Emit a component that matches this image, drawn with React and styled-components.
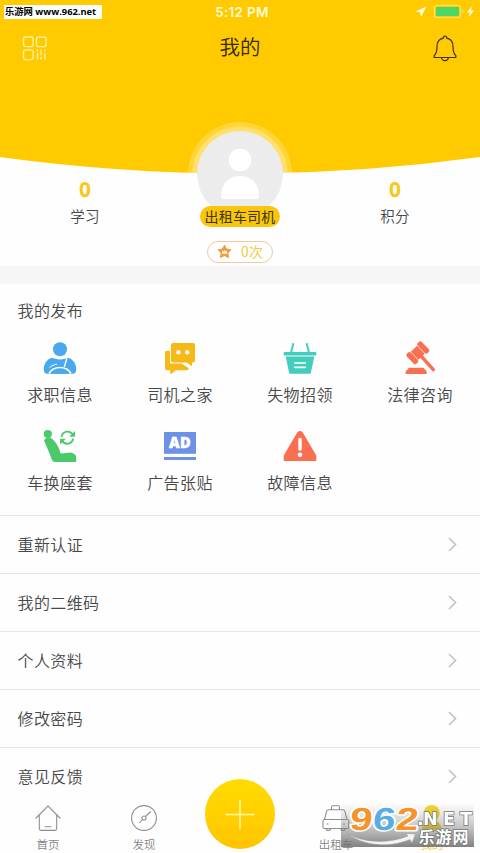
import React, { Component } from 'react'
import styled, { createGlobalStyle } from 'styled-components'

const GlobalStyle = createGlobalStyle`
    * {
        box-sizing: border-box;
    }

    body {
        margin: 0;
        background: #fff;
        font-family: 'Noto Sans CJK SC', sans-serif;
        font-weight: 350;
        color: #484848;
        overflow: hidden;
    }
`

const Page = styled.div`
    width: 480px;
    height: 853px;
    display: flex;
    flex-direction: column;
    overflow: hidden;
    background: #fefefe;
`

const Header = styled.header`
    position: relative;
    flex: none;
    height: 266px;
`

const Curve = styled.svg`
    position: absolute;
    top: 0;
    left: 0;
    z-index: 0;
`

const StatusBar = styled.div`
    position: relative;
    height: 24px;
    display: grid;
    grid-template-columns: 1fr auto 1fr;
    align-items: center;
`

const SiteTag = styled.span`
    position: absolute;
    left: 4px;
    top: 5px;
    width: 98px;
    height: 14px;
    padding-left: 1px;
    background: #fff;
    color: #000;
    font: bold 9.3px/14px 'Open Sans', 'Noto Sans CJK SC', sans-serif;
    white-space: nowrap;
`

const Clock = styled.span`
    grid-column: 2;
    padding-left: 4px;
    color: #fffbd8;
    font: 600 13.5px/24px Inter, sans-serif;
    letter-spacing: 0.3px;
`

const StatusIcons = styled.svg`
    justify-self: end;
`

const NavBar = styled.div`
    position: relative;
    height: 48px;
    padding: 0 22px;
    display: flex;
    align-items: center;
    justify-content: space-between;
`

const Title = styled.h1`
    margin: 0;
    padding-bottom: 4px;
    color: #33290c;
    font-size: 20.5px;
    font-weight: 350;
    line-height: 30px;
`

const Profile = styled.div`
    position: relative;
    display: grid;
    grid-template-columns: 170px 140px 170px;
`

const Stat = styled.div`
    padding-top: 102px;
    text-align: center;
`

const StatValue = styled.div`
    color: #fbc61a;
    font: 700 21px/30px 'Open Sans', sans-serif;
`

const StatLabel = styled.div`
    font-size: 14.5px;
    line-height: 24px;
    letter-spacing: 0.3px;
`

const Person = styled.div`
    padding-top: 50px;
    display: flex;
    flex-direction: column;
    align-items: center;
`

const Role = styled.div`
    position: relative;
    width: 80px;
    height: 21px;
    margin-top: -20px;
    border-radius: 11px;
    background: #f9c60c;
    color: #40340c;
    font-size: 14px;
    font-weight: 400;
    line-height: 20px;
    letter-spacing: 0.2px;
    text-align: center;
`

const Times = styled.div`
    width: 66px;
    height: 22px;
    margin-top: 14px;
    padding-bottom: 2px;
    display: flex;
    align-items: center;
    justify-content: center;
    gap: 9px;
    border: 1px solid #f3c9a4;
    border-radius: 11px;
    color: #f3ca45;
    font-size: 14px;
    font-weight: 400;
    line-height: 18px;
`

const Divider = styled.div`
    flex: none;
    height: 18px;
    background: #f6f6f6;
`

const Section = styled.section`
    flex: none;
    height: 232px;
    border-bottom: 1px solid #e6e6e6;
`

const SectionTitle = styled.h2`
    margin: 0;
    padding: 14px 17.5px 0;
    font-size: 16px;
    font-weight: 350;
    line-height: 24px;
    letter-spacing: 0.4px;
`

const Grid = styled.div`
    padding-top: 19px;
    display: grid;
    grid-template-columns: repeat(4, 1fr);
    grid-auto-rows: 88px;
`

const Cell = styled.div`
    display: flex;
    flex-direction: column;
    align-items: center;
    font-size: 16px;
    line-height: 24px;
    letter-spacing: 0.4px;
    gap: 5px;
`

const List = styled.div`
    flex: 1;
    min-height: 0;
    overflow: hidden;
`

const Row = styled.div`
    height: 58px;
    padding: 0 22px 2px 17.5px;
    display: flex;
    align-items: center;
    justify-content: space-between;
    border-bottom: 1px solid #e6e6e6;
    font-size: 16px;
    letter-spacing: 0.4px;
`

const TabBar = styled.nav`
    position: relative;
    flex: none;
    height: 55px;
    display: grid;
    grid-template-columns: repeat(5, 96px);
    background: #fefefe;
`

const Tab = styled.div`
    padding-top: 6px;
    display: flex;
    flex-direction: column;
    align-items: center;
    gap: 3px;
    color: ${props => (props.$active ? '#f5cf1c' : '#858585')};
    font-size: 11.5px;
    line-height: 18px;
`

const AddButton = styled.div`
    width: 70px;
    height: 70px;
    margin: -19px auto 0;
    display: flex;
    align-items: center;
    justify-content: center;
    border-radius: 50%;
    background: linear-gradient(#ffdc00, #ffc400);
`

const Watermark = styled.svg`
    position: absolute;
    right: 0;
    bottom: 0;
`

const Icon = ({ size = 36, children }) => (
    <svg width={size} height={size} viewBox={`0 0 ${size} ${size}`} fill="none">
        {children}
    </svg>
)

const DriverIcon = () => (
    <Icon>
        <circle cx="18" cy="8.3" r="7" fill="#48a9ee" />
        <path
            d="M8 17.5C11 16 13 18.6 18 18.6s7-2.6 10-1.100c4 2 6.200 6.300 6.200 10.500 0 3.400-1 4.700-3.700 4.700h-25C2.800 32.700 1.800 31.400 1.800 28 1.800 23.800 4 19.500 8 17.500Z"
            fill="#48a9ee"
        />
        <path d="M8.500 32.700C10 29.500 13.500 27.800 18 27.800s8 1.700 9.500 4.900Z" fill="#48a9ee" />
        <path d="M7 32.500C9.500 28.300 13.500 26.500 18 26.500s8.500 1.800 11 6" stroke="#fff" strokeWidth="1.500" />
        <path d="M24.800 17.500L22.300 26" stroke="#fff" strokeWidth="1.400" />
        <path d="M7.500 26.500C10 24.500 12.500 23.500 15 23.300" stroke="#fff" strokeWidth="1" />
    </Icon>
)

const ChatIcon = () => (
    <Icon>
        <path
            d="M5 9.700h3v12.700h11.500l7 4.500c.5 1.300-.5 2.300-2 2.300H14l-4.500 3.500c-.8.300-1.300 0-1.300-.8V29.200H5c-1.300 0-2-.8-2-2V11.700c0-1.200.7-2 2-2Z"
            fill="#f6b916"
        />
        <path
            d="M11 2h20c1.300 0 2 .8 2 2v15.500c0 1.200-.7 2-2 2h-1v3.700l-5.300-3.700H11c-1.300 0-2-.8-2-2V4c0-1.200.7-2 2-2Z"
            fill="#f6b916"
        />
        <circle cx="16.500" cy="11.200" r="2.200" fill="#fff" />
        <circle cx="25.200" cy="11.200" r="2.200" fill="#fff" />
    </Icon>
)

const BasketIcon = () => (
    <Icon>
        <path d="M11.500 2.300L8.800 12M24.500 2.300L27.200 12" stroke="#42cdbd" strokeWidth="2" />
        <rect x="1.700" y="11" width="32.600" height="3.500" rx="1" fill="#42cdbd" />
        <path d="M3.700 15.500h28.600L29 31.200c-.2 1-.8 1.600-1.800 1.600H8.800c-1 0-1.600-.6-1.800-1.600Z" fill="#42cdbd" />
        <path d="M12.800 22h10.500M12.800 26.400h10.500" stroke="#fff" strokeWidth="1.600" strokeLinecap="round" />
    </Icon>
)

const GavelIcon = () => (
    <Icon>
        <path d="M19 15L31.300 28.700" stroke="#f97051" strokeWidth="3.400" strokeLinecap="round" />
        <g transform="translate(15.800 11.800) rotate(46)" fill="#f97051">
            <rect x="-5.500" y="-4.300" width="11" height="8.600" />
            <rect x="-7" y="-10.500" width="14" height="5.700" rx="2.300" />
            <rect x="-7" y="4.800" width="14" height="5.700" rx="2.300" />
        </g>
        <path d="M7 26.800h14.500l3.200 3.600V33h-21v-2.600Z" fill="#f97051" />
    </Icon>
)

const SeatIcon = () => (
    <Icon>
        <circle cx="5.800" cy="5" r="4.100" fill="#4cc969" />
        <path
            d="M2 11.800C2.300 9.500 7 7.300 9.200 9c4.800 4 8 9.200 9.400 15.300 3.400.5 6-.8 9.600-.8 3 .5 5.300 2 6 4v5.500H13c-1.500 0-2.500-.7-3-2C7.500 24.500 5 18 2 11.800Z"
            fill="#4cc969"
        />
        <path d="M19.500 8C20.500 1.600 28.500.8 31 6M31.200 9.500C30 15.800 22.500 16.300 20 11.500" stroke="#4cc969" strokeWidth="1.800" />
        <path d="M33 2v5.800h-5.800ZM18 15.500V9.700h5.800Z" fill="#4cc969" />
    </Icon>
)

const AdIcon = () => (
    <Icon>
        <rect x="2" y="3" width="32" height="21.800" fill="#6e91e8" />
        <rect x="2" y="28" width="32" height="3" fill="#6e91e8" />
        <text
            x="18"
            y="19.200"
            textAnchor="middle"
            textLength="22"
            lengthAdjust="spacingAndGlyphs"
            fill="#fff"
            stroke="#fff"
            strokeWidth=".5"
            fontFamily="Open Sans"
            fontSize="15"
            fontWeight="800"
        >
            AD
        </text>
    </Icon>
)

const WarnIcon = () => (
    <Icon>
        <path
            d="M15.200 3.600c1.400-2.200 4.200-2.200 5.600 0L33.700 25.500c.5 1 .6 1.800.6 3V32H1.700v-3.500c0-1.200.1-2 .6-3Z"
            fill="#f97051"
        />
        <path d="M18 10.500v9.500" stroke="#fff" strokeWidth="3.400" strokeLinecap="round" />
        <circle cx="18" cy="25.800" r="2.300" fill="#fff" />
    </Icon>
)

const HomeIcon = () => (
    <Icon size={28}>
        <path
            d="M1.500 14.500L14 2l12.500 12.500M5.300 11v13.500c0 1.200.6 1.900 1.800 1.900h13.800c1.200 0 1.800-.7 1.800-1.900V11M10.700 22.700h6.600"
            stroke="#8f8f8f"
            strokeWidth="1.100"
        />
    </Icon>
)

const CompassIcon = () => (
    <Icon size={28}>
        <g stroke="#8f8f8f" strokeWidth="1.100">
            <circle cx="14" cy="14" r="12.400" />
            <circle cx="14" cy="14" r="2" />
            <path d="M15.500 12.500L20.700 7.500M12.500 15.500L9.300 19" />
        </g>
    </Icon>
)

const TaxiIcon = () => (
    <Icon size={28}>
        <g stroke="#8f8f8f" strokeWidth="1.100">
            <path d="M9.500 5.700V3c0-.8.500-1.300 1.300-1.300h5.400c.8 0 1.300.5 1.300 1.300v2.700M6.500 5.700h14.500c1 0 1.500.5 1.800 1.500L25 15.500H2.500L4.700 7.200c.3-1 .8-1.500 1.800-1.500ZM2.500 15.500c-1 0-1.500.5-1.500 1.500v6c0 1 .5 1.500 1.500 1.500h22.700c1 0 1.500-.5 1.500-1.500v-6c0-1-.5-1.500-1.500-1.500" />
            <path d="M4.200 24.500c0 2.700 4.300 2.700 4.300 0M18.800 24.500c0 2.700 4.300 2.700 4.300 0M4.500 20h2M21 20h2" />
        </g>
    </Icon>
)

const UserIcon = () => (
    <Icon size={28}>
        <g fill="#f5d721">
            <circle cx="13.800" cy="9" r="8" />
            <path d="M4 27c0-7 3.500-11 9.800-11s9.800 4 9.800 11Z" />
        </g>
    </Icon>
)

const Chevron = () => (
    <svg width="12" height="18" viewBox="0 0 12 18" fill="none">
        <path d="M3 3l6.500 6.500L3 16" stroke="#c4c4c8" strokeWidth="1.700" />
    </svg>
)

const services = [
    { label: '求职信息', icon: DriverIcon },
    { label: '司机之家', icon: ChatIcon },
    { label: '失物招领', icon: BasketIcon },
    { label: '法律咨询', icon: GavelIcon },
    { label: '车换座套', icon: SeatIcon },
    { label: '广告张贴', icon: AdIcon },
    { label: '故障信息', icon: WarnIcon },
]

const rows = ['重新认证', '我的二维码', '个人资料', '修改密码', '意见反馈']

const digits = [
    { value: '9', x: 0, color: '#f7932b' },
    { value: '6', x: 23, color: '#58aee4' },
    { value: '2', x: 46, color: '#f7932b' },
]

const SiteMark = () => (
    <Watermark width="140" height="52" viewBox="340 801 140 52">
        <defs>
            <linearGradient id="shade" x1="0" y1="0" x2="0" y2="1">
                <stop offset="0" stopColor="#999" stopOpacity="0" />
                <stop offset="1" stopColor="#6c6c6c" stopOpacity=".85" />
            </linearGradient>
        </defs>
        <rect x="341" y="803" width="133" height="44" fill="url(#shade)" />
        <path
            d="M347 834c20 10 44 9 61 2l-2-2.500 9.500.5-3.500 9-2-3.500c-22 9-46 6-63-5.500Z"
            fill="#f4f4f4"
            stroke="#999"
            strokeWidth=".5"
        />
        <g
            transform="translate(349 830) skewX(-6)"
            fontFamily="Liberation Sans"
            fontSize="32"
            fontWeight="700"
            stroke="#fff"
            strokeWidth="3"
            strokeLinejoin="round"
            paintOrder="stroke"
        >
            {digits.map(({ value, x, color }) => (
                <text key={value} x={x} textLength="22.500" lengthAdjust="spacingAndGlyphs" fill={color}>
                    {value}
                </text>
            ))}
        </g>
        <g fill="#fff" stroke="#777" strokeWidth="1.600" paintOrder="stroke" fontWeight="700">
            <g fontFamily="DejaVu Sans" fontSize="17.500">
                <text x="417" y="825">.</text>
                <text x="423" y="825" textLength="49">NET</text>
            </g>
            <text x="418.500" y="843" fontFamily="Noto Sans CJK SC" fontSize="16" textLength="50">
                乐游网
            </text>
        </g>
    </Watermark>
)

class App extends Component {
    render() {
        return (
            <React.Fragment>
                <GlobalStyle />
                <Page>
                    <Header>
                        <Curve width="480" height="180">
                            <path d="M0 0H480V157Q240 190 0 157Z" fill="#ffca00" />
                        </Curve>
                        <StatusBar>
                            <SiteTag>乐游网 www.962.net</SiteTag>
                            <Clock>5:12 PM</Clock>
                            <StatusIcons width="66" height="24" viewBox="414 0 66 24">
                                <path d="M426.500 6.500L421 17l-.8-4.500-4.700-1Z" fill="#fffbd8" />
                                <rect x="434.500" y="5.500" width="26" height="12" rx="2" fill="none" stroke="#f3e46a" strokeWidth="1.200" />
                                <rect x="436" y="7" width="23" height="9" rx="1" fill="#4cd765" />
                                <path d="M462 9.500c2 .5 2 3.500 0 4Z" fill="#f3e46a" />
                                <path d="M472 6l-5 6.500h3l-1.500 5 5.500-7h-3Z" fill="#fffbd8" />
                            </StatusIcons>
                        </StatusBar>
                        <NavBar>
                            <svg width="26" height="26" viewBox="0 0 26 26" fill="none" stroke="#fff0a0" strokeWidth="1.400">
                                <rect x="1.500" y="2" width="9.600" height="9.600" rx="2" />
                                <rect x="14.500" y="2" width="9.600" height="9.600" rx="2" />
                                <rect x="1.500" y="15" width="9.600" height="9.600" rx="2" />
                                <path d="M15.500 18v6.500M15.500 14.500v2M19 14.500v6M19 22v2.500M22.800 14.500v2M22.800 18v6.500" />
                            </svg>
                            <Title>我的</Title>
                            <svg width="26" height="28" viewBox="0 0 26 28" fill="none" stroke="#403509" strokeWidth="1.200">
                                <path d="M13 2c1.200 0 1.700.8 1.700 2.200 4.500 1 6.300 4 6.300 8.300 0 5 .8 7.500 2.800 9v2H2.200v-2C4.200 20 5 17.500 5 12.500c0-4.300 1.800-7.300 6.300-8.300C11.300 2.800 11.800 2 13 2Z" />
                                <path d="M9.500 23.500c.5 4.200 6.500 4.200 7 0" />
                            </svg>
                        </NavBar>
                        <Profile>
                            <Stat>
                                <StatValue>0</StatValue>
                                <StatLabel>学习</StatLabel>
                            </Stat>
                            <Person>
                                <svg width="104" height="104" viewBox="0 0 104 104">
                                    <circle cx="52" cy="52" r="52" fill="#fff" fillOpacity=".22" />
                                    <circle cx="52" cy="52" r="47.500" fill="#fff" fillOpacity=".28" />
                                    <circle cx="52" cy="52" r="43" fill="#ececec" />
                                    <circle cx="52" cy="38" r="11.200" fill="#fff" />
                                    <path d="M33 74c0-13 8-20 19-20s19 7 19 20c0 2-1 3-3 3H36c-2 0-3-1-3-3Z" fill="#fff" />
                                </svg>
                                <Role>出租车司机</Role>
                                <Times>
                                    <svg width="15" height="15" viewBox="0 0 15 15">
                                        <path
                                            d="M7.500 1.200l2 3.900 4.400.7-3.100 3.200.7 4.500-4-2-4 2 .7-4.500L1.100 5.800l4.400-.7Z"
                                            fill="#f79a32"
                                            stroke="#f79a32"
                                            strokeLinejoin="round"
                                        />
                                        <path d="M5 6.500l1.500 1 1-1.500 1 1.500 1.500-1v3.200H5Z" fill="#fff" />
                                    </svg>
                                    0次
                                </Times>
                            </Person>
                            <Stat>
                                <StatValue>0</StatValue>
                                <StatLabel>积分</StatLabel>
                            </Stat>
                        </Profile>
                    </Header>
                    <Divider />
                    <Section>
                        <SectionTitle>我的发布</SectionTitle>
                        <Grid>
                            {services.map(({ label, icon: ServiceIcon }) => (
                                <Cell key={label}>
                                    <ServiceIcon />
                                    {label}
                                </Cell>
                            ))}
                        </Grid>
                    </Section>
                    <List>
                        {rows.map(row => (
                            <Row key={row}>
                                {row}
                                <Chevron />
                            </Row>
                        ))}
                    </List>
                    <TabBar>
                        <Tab>
                            <HomeIcon />
                            首页
                        </Tab>
                        <Tab>
                            <CompassIcon />
                            发现
                        </Tab>
                        <AddButton>
                            <svg width="30" height="30" stroke="#fff6a8" strokeWidth="1.600">
                                <path d="M0.500 15.500H29.500M15 1V30" />
                            </svg>
                        </AddButton>
                        <Tab>
                            <TaxiIcon />
                            出租车
                        </Tab>
                        <Tab $active>
                            <UserIcon />
                            我的
                        </Tab>
                        <SiteMark />
                    </TabBar>
                </Page>
            </React.Fragment>
        )
    }
}

export default App
